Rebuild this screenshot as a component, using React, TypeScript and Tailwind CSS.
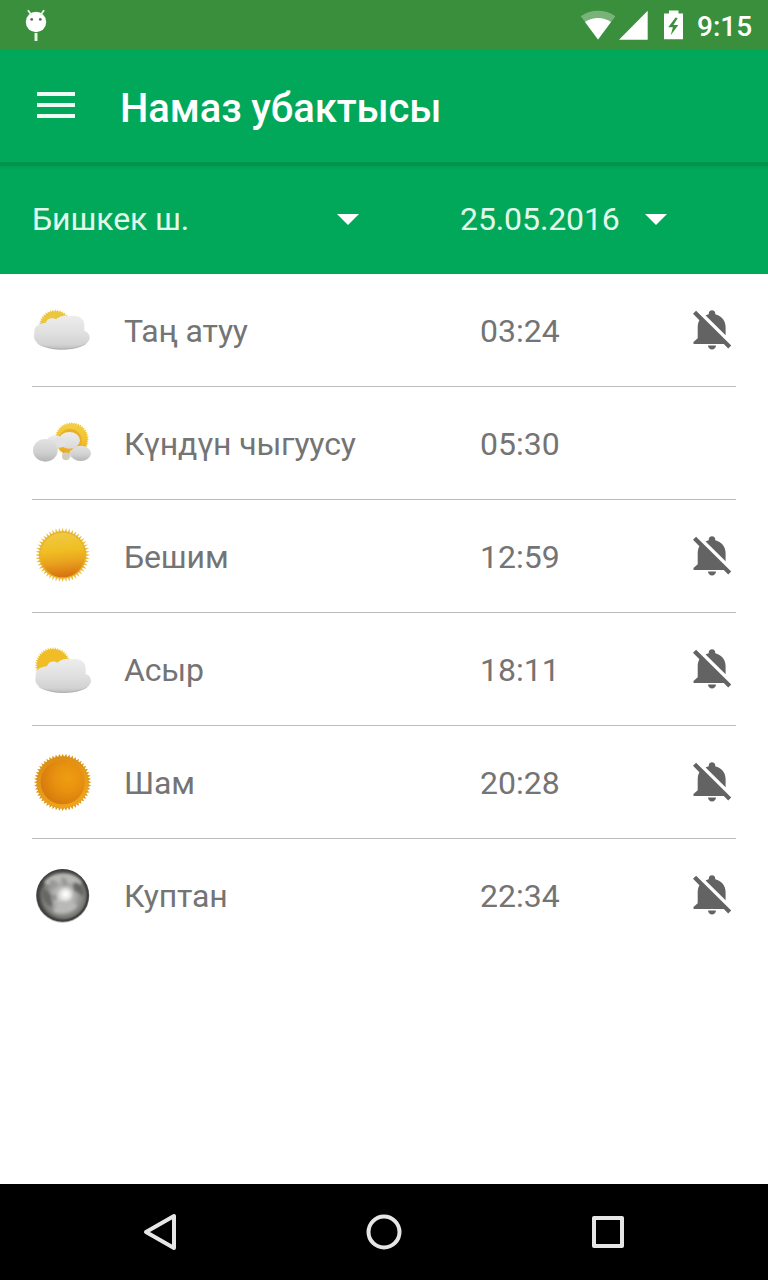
import type { ReactNode } from 'react'

interface Prayer {
  name: string
  time: string
  icon: ReactNode
  muted: boolean
}

function rayPoints(cx: number, cy: number, inner: number, outer: number, count: number) {
  const points: string[] = []
  for (let i = 0; i < count * 2; i++) {
    const r = i % 2 === 0 ? outer : inner
    const a = (Math.PI * i) / count
    points.push(`${(cx + r * Math.cos(a)).toFixed(1)},${(cy + r * Math.sin(a)).toFixed(1)}`)
  }
  return points.join(' ')
}

const CLOUD =
  'M43 128C42 115 49 105 62 102C68 99 74 99 77 99C80 88 91 82 104 86L108 88C120 77 136 74 152 78C172 74 189 83 192 98C194 108 193 116 193 122C203 125 209 133 209 143C208 165 170 179 125 179C80 179 43 162 42 140Z'

function Cloud({ id }: { id: string }) {
  return (
    <>
      <defs>
        <linearGradient id={id} x1="0" y1="0" x2="0" y2="1">
          <stop offset="0" stopColor="#ededee" />
          <stop offset="0.5" stopColor="#e0e0e1" />
          <stop offset="0.85" stopColor="#d2d2d3" />
          <stop offset="1" stopColor="#bcbcbd" />
        </linearGradient>
      </defs>
      <path d={CLOUD} fill={`url(#${id})`} />
      <path d="M52 160C75 178 160 186 198 161" fill="none" stroke="#9c9c9c" strokeWidth="2" opacity="0.6" />
    </>
  )
}

function DawnIcon() {
  return (
    <svg className="size-[60px]" viewBox="36 30 180 180">
      <polygon points={rayPoints(106, 109, 44, 51, 40)} fill="#eccb55" />
      <circle cx="106" cy="109" r="45" fill="#ebc73f" />
      <Cloud id="dawn-cloud" />
    </svg>
  )
}

function SunriseIcon() {
  return (
    <svg className="size-[60px]" viewBox="36 39 180 180">
      <defs>
        <linearGradient id="rise-sun" x1="0" y1="0" x2="0" y2="1">
          <stop offset="0" stopColor="#f3d044" />
          <stop offset="0.6" stopColor="#f2bd2c" />
          <stop offset="1" stopColor="#e39c1d" />
        </linearGradient>
        <linearGradient id="rise-cloud" x1="0" y1="0" x2="0" y2="1">
          <stop offset="0" stopColor="#e2e2e2" />
          <stop offset="0.6" stopColor="#d0d0d0" />
          <stop offset="1" stopColor="#b4b4b4" />
        </linearGradient>
        <linearGradient id="rise-light" x1="0" y1="0" x2="0" y2="1">
          <stop offset="0" stopColor="#ececec" />
          <stop offset="1" stopColor="#dadada" />
        </linearGradient>
      </defs>
      <polygon points={rayPoints(155, 118, 46, 52, 44)} fill="#edc850" />
      <circle cx="155" cy="118" r="47" fill="url(#rise-sun)" />
      <circle cx="150" cy="122" r="35" fill="#eaae2a" />
      <ellipse cx="105" cy="124" rx="24" ry="18" fill="url(#rise-light)" />
      <ellipse cx="148" cy="121" rx="32" ry="25" fill="url(#rise-light)" />
      <ellipse cx="118" cy="128" rx="20" ry="15" fill="#e2e2e2" />
      <ellipse cx="76" cy="151" rx="37" ry="34" fill="url(#rise-cloud)" />
      <circle cx="138" cy="169" r="12" fill="#d3cdbd" />
      <circle cx="160" cy="161" r="12" fill="#dcdcdc" />
      <ellipse cx="182" cy="160" rx="31" ry="23" fill="url(#rise-cloud)" />
    </svg>
  )
}

function NoonIcon() {
  return (
    <svg className="size-[60px]" viewBox="36 48 180 180">
      <defs>
        <linearGradient id="noon-sun" x1="0.45" y1="0" x2="0.55" y2="1">
          <stop offset="0" stopColor="#efc945" />
          <stop offset="0.4" stopColor="#efbe22" />
          <stop offset="0.65" stopColor="#e9a31f" />
          <stop offset="1" stopColor="#d7700f" />
        </linearGradient>
      </defs>
      <polygon points={rayPoints(128, 135, 67, 82, 48)} fill="#eabc3c" />
      <circle cx="128" cy="135" r="71" fill="#e9b02a" />
      <circle cx="128" cy="135" r="67" fill="url(#noon-sun)" />
    </svg>
  )
}

function AfternoonIcon() {
  return (
    <svg className="size-[60px]" viewBox="36 27 180 180">
      <polygon points={rayPoints(99, 106, 47, 55, 44)} fill="#ecc546" />
      <circle cx="99" cy="106" r="48" fill="#f0bd27" />
      <g transform="translate(4 10)">
        <Cloud id="afternoon-cloud" />
      </g>
    </svg>
  )
}

function SunsetIcon() {
  return (
    <svg className="size-[60px]" viewBox="36 36 180 180">
      <defs>
        <radialGradient id="set-sun" cx="0.62" cy="0.4" r="0.65">
          <stop offset="0" stopColor="#ee9e12" />
          <stop offset="0.5" stopColor="#e8900f" />
          <stop offset="1" stopColor="#d57a0d" />
        </radialGradient>
        <linearGradient id="set-rim" x1="0" y1="0" x2="0.4" y2="1">
          <stop offset="0" stopColor="#d98a16" />
          <stop offset="1" stopColor="#eda41c" />
        </linearGradient>
      </defs>
      <polygon points={rayPoints(128, 127, 76, 86, 52)} fill="#d9971f" />
      <circle cx="128" cy="127" r="78" fill="url(#set-rim)" />
      <circle cx="128" cy="127" r="66" fill="url(#set-sun)" />
    </svg>
  )
}

function MoonIcon() {
  return (
    <svg className="size-[60px]" viewBox="36 45 180 180">
      <defs>
        <radialGradient id="moon-disc" cx="0.52" cy="0.52" r="0.5">
          <stop offset="0" stopColor="#dededc" />
          <stop offset="0.45" stopColor="#aeaeac" />
          <stop offset="0.85" stopColor="#7c7c7a" />
          <stop offset="1" stopColor="#4a4a49" />
        </radialGradient>
        <filter id="moon-soft" x="-20%" y="-20%" width="140%" height="140%">
          <feGaussianBlur stdDeviation="4.5" />
        </filter>
      </defs>
      <circle cx="128" cy="138" r="80" fill="#b5b5b5" />
      <circle cx="128" cy="136" r="79" fill="#414140" />
      <circle cx="128" cy="136" r="73" fill="url(#moon-disc)" />
      <g filter="url(#moon-soft)">
        <path d="M72 98C92 62 165 60 186 98C170 112 150 94 130 102C112 94 90 114 72 98Z" fill="#b8b8b6" />
        <path d="M64 118C62 142 76 166 94 172C102 160 90 150 94 138C88 128 78 112 64 118Z" fill="#666664" />
        <path d="M88 92C100 84 114 94 110 106C102 116 88 108 88 92Z" fill="#999997" />
        <path d="M124 82C136 80 146 94 140 106C128 110 124 98 124 82Z" fill="#979795" />
        <path d="M162 98C178 96 194 112 192 136C180 138 176 122 162 122C166 112 156 108 162 98Z" fill="#656563" />
        <path d="M98 134C110 128 112 148 104 154C96 150 92 140 98 134Z" fill="#8e8e8c" />
        <path d="M120 158C138 148 166 156 172 168C154 194 110 196 98 182C106 176 108 166 120 158Z" fill="#b9b9b7" />
        <circle cx="137" cy="133" r="19" fill="#e6e6e4" />
        <circle cx="137" cy="133" r="9" fill="#fff" />
      </g>
    </svg>
  )
}

function BellOffIcon() {
  return (
    <svg className="size-12 fill-[#636363]" viewBox="0 0 24 24">
      <path d="M11.5 22c1.1 0 2-.9 2-2h-4c0 1.1.9 2 2 2z" transform="translate(.5 -.3)" />
      <path d="M18.8 10.5c0-3.07-2.13-5.64-5.2-6.32V3.5c0-.83-.77-1.4-1.6-1.4s-1.6.57-1.6 1.4v.68c-.61.12-1.1.32-1.6.6l10 9.9V10.5z" />
      <path d="M17.9 19l2.2 2.2 1.5-1.45L4.05 2.4 2.5 3.9l3.2 3.2c-.55 1-.85 2.2-.85 3.45V16.1l-2.1 1.9v1H17.9z" />
    </svg>
  )
}

function StatusBar() {
  return (
    <div className="flex h-[50px] items-center bg-[#3a8f3c]">
      <svg className="ml-6 h-[50px] w-6" viewBox="24 0 24 50">
        <circle cx="36" cy="22" r="10.2" fill="#fff" />
        <path d="M28.3 10.8l3.2 4.2M43.7 10.8L40.5 15" stroke="#e8f5e9" strokeWidth="1.8" strokeLinecap="round" />
        <circle cx="31.7" cy="19.4" r="1.4" fill="#5c6b5c" />
        <circle cx="40.3" cy="19.4" r="1.4" fill="#5c6b5c" />
        <path d="M36 33v8" stroke="#e4f3e5" strokeWidth="3" />
      </svg>
      <svg className="ml-[532px] h-[50px] w-[108px]" viewBox="580 0 108 50">
        <path d="M598 39.5L580.8 16.2C591 8.9 605 8.9 615.4 16.2Z" fill="#fff" opacity="0.32" />
        <path d="M598 39.5L585 22C593 16.8 603 16.8 611 22Z" fill="#fff" />
        <path d="M619 39.7h28.7V10.8z" fill="#fff" />
        <path
          d="M669 10.5h9.5v3h4.5v25.7h-19V13.5h5zM675.6 17.5l-7.4 9.8h4.7l-2.2 7.9 7.6-10.1h-4.9l4.2-6.8z"
          fill="#fff"
          fillRule="evenodd"
        />
      </svg>
      <span className="ml-[9px] pt-[3px] text-[28px] leading-8 font-medium text-white">9:15</span>
    </div>
  )
}

function AppBar() {
  return (
    <header className="flex h-28 items-center bg-[#02a859] pl-[37px]">
      <button className="mb-0.5 flex w-[38px] flex-col gap-[7px]">
        <span className="h-1 bg-[#effbf4]" />
        <span className="h-1 bg-[#effbf4]" />
        <span className="h-1 bg-[#effbf4]" />
      </button>
      <h1 className="ml-[45px] pt-1.5 text-[40px] leading-none font-medium tracking-[-0.1px] text-white">
        Намаз убактысы
      </h1>
    </header>
  )
}

function Caret() {
  return (
    <svg className="h-[11px] w-[22px]" viewBox="0 0 22 11">
      <path d="M0 0h22L11 11z" fill="#fff" />
    </svg>
  )
}

function FilterBar() {
  return (
    <div className="h-28 bg-[#02a859]">
      <div className="h-1 bg-[#00944b]" />
      <div className="h-1 bg-linear-to-b from-[#009f52] to-[#02a859]" />
      <div className="flex h-[100px] items-center pb-0.5 pl-8 text-[32px] leading-9 tracking-[-0.1px] text-[#e3f8ec]">
        <div className="flex w-[327px] items-center justify-between">
          <span>Бишкек ш.</span>
          <Caret />
        </div>
        <div className="ml-[101px] flex w-[207px] items-center justify-between">
          <span>25.05.2016</span>
          <Caret />
        </div>
      </div>
    </div>
  )
}

const prayers: Prayer[] = [
  { name: 'Таң атуу', time: '03:24', icon: <DawnIcon />, muted: true },
  { name: 'Күндүн чыгуусу', time: '05:30', icon: <SunriseIcon />, muted: false },
  { name: 'Бешим', time: '12:59', icon: <NoonIcon />, muted: true },
  { name: 'Асыр', time: '18:11', icon: <AfternoonIcon />, muted: true },
  { name: 'Шам', time: '20:28', icon: <SunsetIcon />, muted: true },
  { name: 'Куптан', time: '22:34', icon: <MoonIcon />, muted: true },
]

function NavigationBar() {
  return (
    <nav className="grid h-24 grid-cols-3 items-center justify-items-center bg-black px-12">
      <svg className="size-12" viewBox="0 0 48 48" fill="none" stroke="#e6e6e6" strokeWidth="4" strokeLinejoin="round">
        <path d="M38 8v32L10 24z" />
      </svg>
      <svg className="size-12" viewBox="0 0 48 48" fill="none" stroke="#e6e6e6" strokeWidth="4">
        <circle cx="24" cy="24" r="15.5" />
      </svg>
      <svg className="size-12" viewBox="0 0 48 48" fill="none" stroke="#e6e6e6" strokeWidth="4" strokeLinejoin="round">
        <rect x="10" y="10" width="28" height="28" />
      </svg>
    </nav>
  )
}

export default function App() {
  return (
    <div className="flex h-[1280px] w-[768px] flex-col overflow-hidden bg-white font-[Roboto,sans-serif]">
      <StatusBar />
      <AppBar />
      <FilterBar />
      <ul className="flex-1 divide-y divide-[#bbbbbb] px-8 text-[32px] leading-9 text-[#747474]">
        {prayers.map((prayer) => (
          <li key={prayer.name} className="box-content flex h-28 items-center">
            {prayer.icon}
            <span className="ml-8 w-[356px] pt-0.5 tracking-[-0.15px]">{prayer.name}</span>
            <span className="flex-1 pt-0.5">{prayer.time}</span>
            {prayer.muted && <BellOffIcon />}
          </li>
        ))}
      </ul>
      <NavigationBar />
    </div>
  )
}
